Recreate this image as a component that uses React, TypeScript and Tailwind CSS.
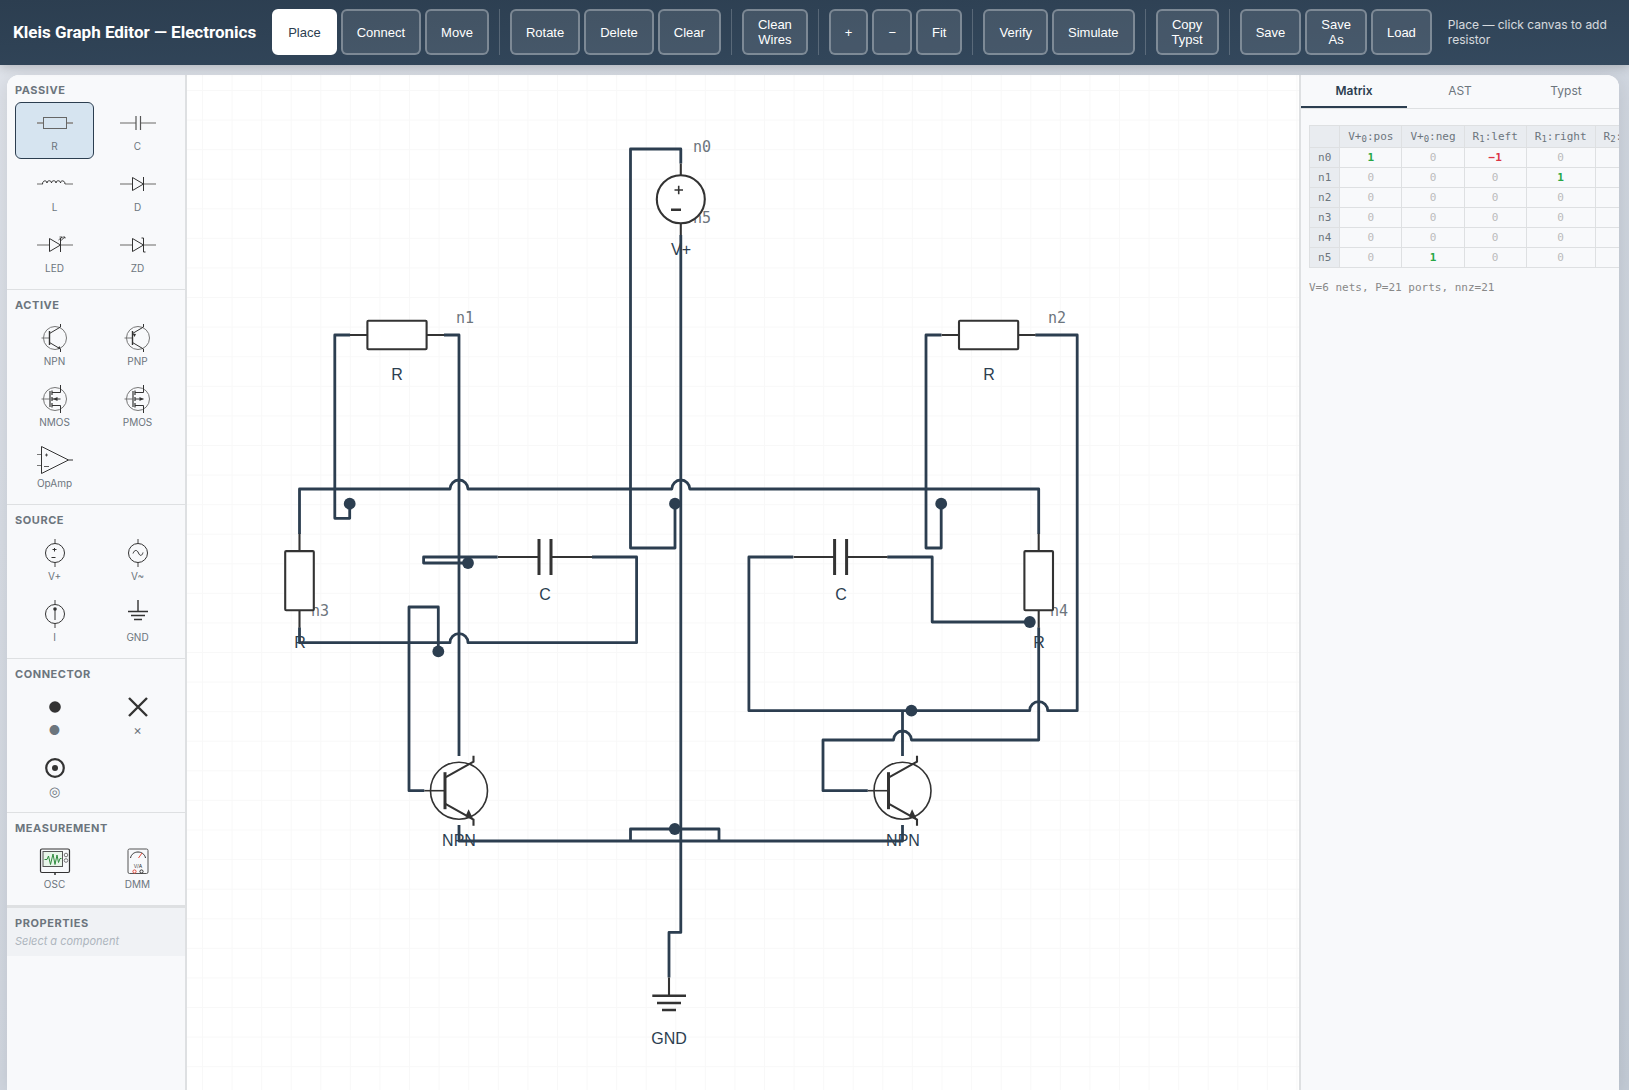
import type { ReactNode } from "react";
import clsx from "clsx";

const toolGroups = [
  ["Place", "Connect", "Move"],
  ["Rotate", "Delete", "Clear"],
  ["Clean Wires"],
  ["+", "−", "Fit"],
  ["Verify", "Simulate"],
  ["Copy Typst"],
  ["Save", "Save As", "Load"],
];

// Palette symbols, all on a 36x28 box
const diode = (
  <>
    <path d="M0 14H12M24 14H36" stroke="#999" strokeWidth="1.6" />
    <path d="M12.5 7.5V20.5L23.5 14ZM23.5 7V21" />
  </>
);

const fetBody = (
  <>
    <circle cx="18" cy="14" r="11.5" stroke="#777" />
    <path d="M4.5 14H12.5" stroke="#777" />
    <path d="M13 6V22M15 5.5V10M15 12V16M15 18V22.5" strokeWidth="1.2" />
    <path d="M15 7.5H23.5V0M15 20.5H23.5V28" />
    <path d="M15 14H23.5" />
  </>
);

const sourceBody = (
  <>
    <path d="M18 0V4.5M18 23.5V28" stroke="#777" strokeWidth="1.4" />
    <circle cx="18" cy="14" r="9.5" />
  </>
);

const symbols: Record<string, ReactNode> = {
  R: (
    <>
      <path d="M0 14H6M30 14H36" stroke="#999" strokeWidth="2" />
      <rect x="6.5" y="8.5" width="23" height="11" stroke="#666" />
    </>
  ),
  C: (
    <>
      <path d="M0 14H16M21 14H36" stroke="#999" strokeWidth="1.6" />
      <path d="M16 7V21M20.5 7V21" stroke="#555" strokeWidth="1.2" />
    </>
  ),
  L: (
    <>
      <path d="M0 14H6M28 14H36" stroke="#999" strokeWidth="1.6" />
      <path d="M5.5 14c0-4 4.5-4 4.5-1c0-3 4.5-3 4.5 0c0-3 4.5-3 4.5 0c0-3 4.5-3 4.5 0c0-3 4.5-3 4.5 1" />
    </>
  ),
  D: diode,
  LED: (
    <>
      {diode}
      <path d="M21.5 9L25 6M24 9.5L28 6M22.5 6H25V7.5M25.5 6H28V7.5" strokeWidth="0.8" />
    </>
  ),
  ZD: (
    <>
      {diode}
      <path d="M21.5 7H23.5M23.5 21H25.5" />
    </>
  ),
  NPN: (
    <>
      <circle cx="18" cy="14" r="11.5" stroke="#777" />
      <path d="M4.5 14H12.5" stroke="#777" />
      <path d="M12.5 7V21" strokeWidth="1.4" />
      <path d="M12.5 9.5L23.5 3V0M12.5 18.5L23.5 25V28" />
      <path d="M22.5 22L23.5 25L20.5 24.5Z" fill="#333" stroke="none" />
    </>
  ),
  PNP: (
    <>
      <circle cx="18" cy="14" r="11.5" stroke="#777" />
      <path d="M4.5 14H12.5" stroke="#777" />
      <path d="M12.5 7V21" strokeWidth="1.4" />
      <path d="M12.5 9.5L23.5 3V0M12.5 18.5L23.5 25V28" />
      <path d="M12.5 9.5L16 10L14.5 13Z" fill="#333" stroke="none" />
    </>
  ),
  NMOS: (
    <>
      {fetBody}
      <path d="M16 14L20.5 12V16Z" fill="#333" stroke="none" />
    </>
  ),
  PMOS: (
    <>
      {fetBody}
      <path d="M23.5 14L19.5 12V16Z" fill="#333" stroke="none" />
    </>
  ),
  OpAmp: (
    <>
      <path d="M0 8.5H4.5M0 19.5H4.5" stroke="#777" />
      <path d="M4.5 0.5V27.5L31.5 14ZM31.5 14H36" />
      <path d="M9.5 7.5V10.5M8 9H11M7 20.5H12" strokeWidth="0.8" />
    </>
  ),
  "V+": (
    <>
      {sourceBody}
      <path d="M17.5 9V12.5M15.5 10.5H19.5M14.5 18.5H18.5" />
    </>
  ),
  "V~": (
    <>
      {sourceBody}
      <path d="M13 14.5c1.5-4 4-4 5.5-0.5s3.5 3 4.5-0.5" />
    </>
  ),
  I: (
    <>
      {sourceBody}
      <path d="M18 8V20" />
      <circle cx="18" cy="9" r="1.8" fill="#333" stroke="none" />
    </>
  ),
  GND: <path d="M18 0V11M8 11.5H28M11 15.5H25M14 19.5H22" strokeWidth="1.4" />,
  "●": <circle cx="18" cy="14" r="5.8" fill="#333" stroke="none" />,
  "×": <path d="M9 5L27 23M27 5L9 23" strokeWidth="2.4" />,
  "◎": (
    <>
      <circle cx="18" cy="14" r="8.8" strokeWidth="2.2" />
      <circle cx="18" cy="14" r="3" fill="#333" stroke="none" />
    </>
  ),
  OSC: (
    <>
      <rect x="3.5" y="2" width="29" height="23.5" rx="1.5" strokeWidth="1.2" />
      <rect x="6" y="4.5" width="19.5" height="15" fill="#e8f5e9" stroke="#555" />
      <path d="M7.5 12.5H10L11.5 9L13.5 17.5L16 7L18 17.5L20 8L21.5 15.5L23 11.5H24.5" stroke="#2e8b3d" />
      <circle cx="29" cy="8" r="1.8" stroke="#777" />
      <circle cx="29" cy="13.5" r="1.8" stroke="#777" />
      <path d="M18 25.5V28" strokeWidth="1.5" />
    </>
  ),
  DMM: (
    <>
      <rect x="8" y="2" width="20" height="24.5" rx="1.5" stroke="#555" />
      <path d="M10.5 11C12 3 24 3 25.5 11" />
      <path d="M18.5 11L22 6" stroke="#e74c3c" />
      <text x="18" y="21" textAnchor="middle" fontSize="5" fill="#333" stroke="none">
        V/A
      </text>
      <circle cx="14.5" cy="24.5" r="1.6" stroke="#e74c3c" />
      <circle cx="21.5" cy="24.5" r="1.6" />
    </>
  ),
};

const palette = [
  { title: "Passive", items: ["R", "C", "L", "D", "LED", "ZD"] },
  { title: "Active", items: ["NPN", "PNP", "NMOS", "PMOS", "OpAmp"] },
  { title: "Source", items: ["V+", "V~", "I", "GND"] },
  { title: "Connector", items: ["●", "×", "◎"] },
  { title: "Measurement", items: ["OSC", "DMM"] },
];

const wires = [
  "M680.8 163.5V149H630.5V548H675V503.7",
  "M350 335H334.8V518.3H349.7V503.7",
  "M444 335H459V756",
  "M941.5 335H926V548H941.2V503.7",
  "M1035.3 335H1077.2V710.7H1047.7A9 9 0 0 0 1029.7 710.7H748.9V557H793.3",
  "M299.5 534V489H450A9 9 0 0 1 468 489H671.8A9 9 0 0 1 689.8 489H1038.7V534",
  "M299.5 627.5V642.7H450A9 9 0 0 1 468 642.7H636.6V557H592",
  "M497.7 557H423.6V563H468",
  "M438.3 651.4V607H409V790.7H424.3",
  "M887.3 557H932.2V622H1029.8",
  "M1038.7 627.5V740H911.5A9 9 0 0 0 893.5 740H823V790.7H867.8",
  "M902.5 710.7V756",
  "M459 825V841H902.5V825",
  "M630.5 841V829H719V841",
  "M680.8 235V932.4H669V977.5",
];

const junctions = [
  [349.7, 503.7],
  [675, 503.7],
  [941.2, 503.7],
  [468, 563],
  [438.3, 651.4],
  [1029.8, 622],
  [911.4, 710.7],
  [674.8, 829],
];

const netLabels: [string, number, number][] = [
  ["n0", 693, 152],
  ["n5", 693, 223],
  ["n1", 456, 323],
  ["n2", 1048, 323],
  ["n3", 311, 616],
  ["n4", 1050, 616],
];

const partLabels: [string, number, number][] = [
  ["V+", 681, 255],
  ["R", 397, 380],
  ["R", 989, 380],
  ["R", 300, 648],
  ["R", 1039, 648],
  ["C", 545, 600],
  ["C", 841, 600],
  ["NPN", 459, 846],
  ["NPN", 903, 846],
  ["GND", 669, 1044],
];

function Resistor({ x, y, turn = 0 }: { x: number; y: number; turn?: number }) {
  return (
    <g transform={`translate(${x} ${y}) rotate(${turn})`}>
      <path d="M-47 0H-29.6M29.6 0H47" />
      <rect x="-29.6" y="-14.3" width="59.2" height="28.6" rx="1" fill="#fff" />
    </g>
  );
}

function Capacitor({ x, y }: { x: number; y: number }) {
  return (
    <g transform={`translate(${x} ${y})`}>
      <path d="M-47 0H-6M6 0H47" />
      <path d="M-6 -18V18M6 -18V18" strokeWidth="3" />
    </g>
  );
}

function Npn({ x, y }: { x: number; y: number }) {
  return (
    <g transform={`translate(${x} ${y})`}>
      <circle r="28.5" strokeWidth="1.6" fill="#fff" />
      <path d="M-34.7 0H-14" strokeWidth="1.6" />
      <path d="M-14 -18.5V18.5" strokeWidth="3" />
      <path d="M-14 -13L14.5 -29V-35M-14 13L14.5 29V35" />
      <path d="M9.6 18.5L14.5 29L6.5 25.5Z" fill="#333" stroke="none" />
    </g>
  );
}

function Schematic() {
  return (
    <svg className="absolute inset-0 h-full w-full" role="img" aria-label="Schematic">
      <defs>
        <pattern id="grid" x="202" y="90" width="29.58" height="29.58" patternUnits="userSpaceOnUse">
          <path d="M0 0.5H29.58M0.5 0V29.58" stroke="#f8f8f8" fill="none" />
        </pattern>
      </defs>
      <g transform="translate(-187 -75)">
        <rect x="187" y="75" width="100%" height="100%" fill="url(#grid)" />
        <g fill="none" stroke="#2c3e50" strokeWidth="2.8" strokeLinejoin="round">
          {wires.map((d) => (
            <path key={d} d={d} />
          ))}
        </g>
        {junctions.map(([x, y]) => (
          <circle key={`${x}-${y}`} cx={x} cy={y} r="5.9" fill="#2c3e50" />
        ))}
        <g fill="#6c757d" className="font-['DejaVu_Sans_Mono',monospace] text-[15px]">
          {netLabels.map(([text, x, y]) => (
            <text key={text} x={x} y={y}>
              {text}
            </text>
          ))}
        </g>
        <g fill="none" stroke="#333" strokeWidth="2.1">
          <path d="M680.8 163.5V175M680.8 223.5V235" />
          <circle cx="680.8" cy="199.3" r="24" fill="#fff" />
          <path d="M674.5 190H683M678.7 185.7V194.3" strokeWidth="1.6" />
          <path d="M671 209.7H681" strokeWidth="2.6" />
          <Resistor x={397} y={335} />
          <Resistor x={988.6} y={335} />
          <Resistor x={299.5} y={580.7} turn={90} />
          <Resistor x={1038.7} y={580.7} turn={90} />
          <Capacitor x={545} y={557} />
          <Capacitor x={840.6} y={557} />
          <Npn x={459} y={790.7} />
          <Npn x={902.5} y={790.7} />
          <path d="M669 977.5V995.7" />
          <path d="M652.3 995.7H686M657 1002.9H681M662 1010H676" strokeWidth="2.5" />
        </g>
        <g fill="#2c3e50" textAnchor="middle" className="font-['Liberation_Sans',sans-serif] text-base">
          {partLabels.map(([text, x, y]) => (
            <text key={`${x}-${y}`} x={x} y={y}>
              {text}
            </text>
          ))}
        </g>
      </g>
    </svg>
  );
}

const ports = [
  { part: "V+", index: 0, pin: "pos" },
  { part: "V+", index: 0, pin: "neg" },
  { part: "R", index: 1, pin: "left" },
  { part: "R", index: 1, pin: "right" },
  { part: "R", index: 2, pin: "left" },
];

const matrix = [
  [1, 0, -1, 0],
  [0, 0, 0, 1],
  [0, 0, 0, 0],
  [0, 0, 0, 0],
  [0, 0, 0, 0],
  [0, 1, 0, 0],
];

function Toolbar() {
  return (
    <header className="relative z-10 flex items-center gap-4 bg-linear-to-br from-[#2c3e50] to-[#34495e] py-[9px] pr-4 pl-[13px] text-white shadow-[0_2px_10px_rgba(0,0,0,0.2)]">
      <h1 className="shrink-0 font-[Roboto,sans-serif] text-[17px] font-bold">Kleis Graph Editor — Electronics</h1>
      <div className="flex h-[47px] items-stretch gap-1 pb-px">
        {toolGroups.map((group, i) => (
          <div key={group[0]} className="flex gap-1">
            {i > 0 && <div className="mx-1.5 w-px bg-white/20" />}
            {group.map((label) => (
              <button
                key={label}
                type="button"
                className={clsx(
                  "rounded-md border-2 px-3.5 font-['Liberation_Sans',sans-serif] text-[13px] leading-[15px] font-medium",
                  label === "Place" ? "border-white bg-white text-[#2c3e50]" : "border-white/30 bg-white/10 text-white",
                  label.includes(" ") && "w-min",
                )}
              >
                {label}
              </button>
            ))}
          </div>
        ))}
      </div>
      <p className="flex-1 pb-px text-xs leading-[15px] text-white/80">Place — click canvas to add resistor</p>
    </header>
  );
}

function Palette() {
  return (
    <aside className="w-[180px] shrink-0 border-r-2 border-[#dee0e2] bg-[#f8f9fb]">
      {palette.map((section) => (
        <section key={section.title} className="border-b border-[#dee0e2] p-2">
          <h2 className="mb-1 text-[11px] leading-[15px] font-bold tracking-wider text-[#6c757d] uppercase">
            {section.title}
          </h2>
          <div className="grid grid-cols-2 gap-1">
            {section.items.map((name) => (
              <button
                key={name}
                type="button"
                className={clsx(
                  "flex h-[57px] flex-col items-center gap-0.5 rounded-md border pt-1.5",
                  name === "R" ? "border-[#2c3e50] bg-[#d6e4f0]" : "border-transparent",
                )}
              >
                <svg className="h-7 w-9" viewBox="0 0 36 28" fill="none" stroke="#333" strokeWidth="1">
                  {symbols[name]}
                </svg>
                <span
                  className={clsx(
                    "leading-[15px] text-[#6c757d]",
                    section.title === "Connector" ? "text-[13px]" : "text-[10px]",
                  )}
                >
                  {name}
                </span>
              </button>
            ))}
          </div>
        </section>
      ))}
      <section className="border-t-2 border-[#dee0e2] bg-[#f0f2f5] p-2">
        <h2 className="mb-1 text-[11px] leading-[15px] font-bold tracking-wider text-[#6c757d] uppercase">
          Properties
        </h2>
        <p className="text-[11px] leading-[13px] text-[#adb5bd] italic">Select a component</p>
      </section>
    </aside>
  );
}

function Inspector() {
  return (
    <aside className="w-80 shrink-0 overflow-hidden rounded-tr-xl border-l-2 border-[#dee0e2] bg-[#f8f9fb]">
      <nav className="grid grid-cols-3 border-b border-[#dee0e2]">
        {["Matrix", "AST", "Typst"].map((tab) => (
          <button
            key={tab}
            type="button"
            className={clsx(
              "h-[33px] border-b-2 text-xs",
              tab === "Matrix" ? "border-[#2c3e50] font-semibold text-[#2c3e50]" : "border-transparent text-[#6c757d]",
            )}
          >
            {tab}
          </button>
        ))}
      </nav>
      <div className="px-2 py-4 font-['DejaVu_Sans_Mono',monospace] text-[11px] leading-[13px]">
        <table className="border-collapse whitespace-nowrap">
          <thead>
            <tr className="h-[22px] bg-[#e9ecf0] text-[#6c757d]">
              <th className="border border-[#dee0e2] px-2" />
              {ports.map((p) => (
                <th key={`${p.part}${p.index}${p.pin}`} className="border border-[#dee0e2] px-2 font-normal">
                  {p.part}
                  <sub className="text-[9px]">{p.index}</sub>:{p.pin}
                </th>
              ))}
            </tr>
          </thead>
          <tbody>
            {matrix.map((row, r) => (
              <tr key={r} className="h-5">
                <th className="border border-[#dee0e2] bg-[#e9ecf0] px-2 font-normal text-[#6c757d]">n{r}</th>
                {row.map((v, c) => (
                  <td
                    key={c}
                    className={clsx(
                      "border border-[#dee0e2] px-2 text-center",
                      v === 0 && "text-[#bbb]",
                      v > 0 && "font-bold text-[#28a745]",
                      v < 0 && "font-bold text-[#dc3545]",
                    )}
                  >
                    {v < 0 ? `−${-v}` : v}
                  </td>
                ))}
                <td className="border border-[#dee0e2]" />
              </tr>
            ))}
          </tbody>
        </table>
        <p className="mt-3 leading-[15px] text-[#888]">V=6 nets, P=21 ports, nnz=21</p>
      </div>
    </aside>
  );
}

export default function App() {
  return (
    <div className="flex h-screen flex-col overflow-hidden bg-linear-to-br from-[#dfe3ea] to-[#c3cbd6] font-[Inter,sans-serif]">
      <Toolbar />
      <div className="flex min-h-0 flex-1 pt-2.5 pr-2.5 pl-[7px]">
        <div className="flex min-w-0 flex-1 overflow-hidden rounded-t-xl bg-white shadow-[0_4px_20px_rgba(0,0,0,0.1)]">
          <Palette />
          <main className="relative min-w-0 flex-1 bg-white">
            <Schematic />
          </main>
          <Inspector />
        </div>
      </div>
    </div>
  );
}
